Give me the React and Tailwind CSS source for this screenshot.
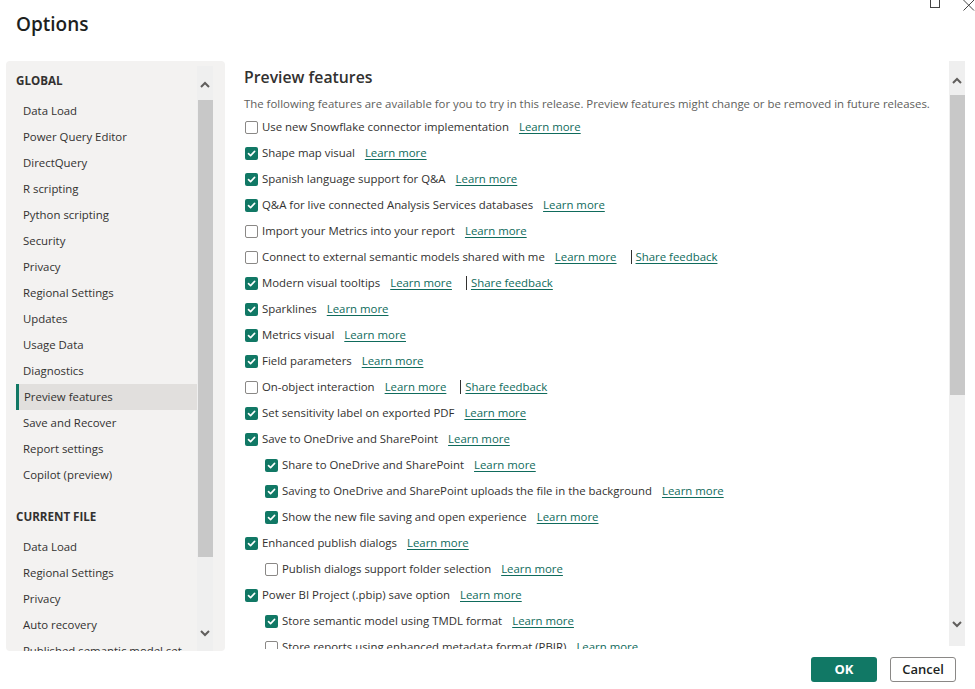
import React from "react";

const font = { fontFamily: '"Open Sans", "Noto Sans", sans-serif' };

function Check({ checked }) {
  if (checked) {
    return (
      <span className="w-[13px] h-[13px] rounded-[2px] bg-[#117865] flex items-center justify-center shrink-0">
        <svg width="9" height="9" viewBox="0 0 9 9">
          <path d="M1.5 4.6 L3.6 6.6 L7.6 2.4" fill="none" stroke="white" strokeWidth="1.6" strokeLinecap="round" strokeLinejoin="round" />
        </svg>
      </span>
    );
  }
  return <span className="w-[13px] h-[13px] rounded-[2px] border border-[#8a8886] bg-white shrink-0" />;
}

function Chevron({ up }) {
  return (
    <svg width="10" height="7" viewBox="0 0 10 7">
      <path d={up ? "M1 6 L5 2 L9 6" : "M1 1 L5 5 L9 1"} fill="none" stroke="#605e5c" strokeWidth="2" strokeLinejoin="miter" />
    </svg>
  );
}

const globalItems = [
  "Data Load",
  "Power Query Editor",
  "DirectQuery",
  "R scripting",
  "Python scripting",
  "Security",
  "Privacy",
  "Regional Settings",
  "Updates",
  "Usage Data",
  "Diagnostics",
  "Preview features",
  "Save and Recover",
  "Report settings",
  "Copilot (preview)",
];
const fileItems = ["Data Load", "Regional Settings", "Privacy", "Auto recovery", "Published semantic model set"];

const features = [
  { t: "Use new Snowflake connector implementation", c: false },
  { t: "Shape map visual", c: true },
  { t: "Spanish language support for Q&A", c: true },
  { t: "Q&A for live connected Analysis Services databases", c: true },
  { t: "Import your Metrics into your report", c: false },
  { t: "Connect to external semantic models shared with me", c: false, fb: true },
  { t: "Modern visual tooltips", c: true, fb: true },
  { t: "Sparklines", c: true },
  { t: "Metrics visual", c: true },
  { t: "Field parameters", c: true },
  { t: "On-object interaction", c: false, fb: true },
  { t: "Set sensitivity label on exported PDF", c: true },
  { t: "Save to OneDrive and SharePoint", c: true },
  { t: "Share to OneDrive and SharePoint", c: true, sub: true },
  { t: "Saving to OneDrive and SharePoint uploads the file in the background", c: true, sub: true },
  { t: "Show the new file saving and open experience", c: true, sub: true },
  { t: "Enhanced publish dialogs", c: true },
  { t: "Publish dialogs support folder selection", c: false, sub: true },
  { t: "Power BI Project (.pbip) save option", c: true },
  { t: "Store semantic model using TMDL format", c: true, sub: true },
  { t: "Store reports using enhanced metadata format (PBIR)", c: false, sub: true },
];

function Link({ children }) {
  return <span className="text-[#0f6b5c] underline underline-offset-2 decoration-[#0f6b5c]">{children}</span>;
}

export default function App() {
  return (
    <div className="relative w-[975px] h-[689px] bg-white overflow-hidden text-[#323130] flex flex-col" style={font}>
      <div className="absolute right-0 top-0 flex items-start">
        <svg width="12" height="10" viewBox="0 0 12 10" className="mr-[21px] -mt-[1px]">
          <rect x="1.5" y="-2" width="9" height="10.5" fill="none" stroke="#444" strokeWidth="1" />
        </svg>
        <svg width="13" height="11" viewBox="0 0 13 11">
          <path d="M1.5 0 L12 10.5 M12 0 L1.5 10.5" stroke="#444" strokeWidth="1" />
        </svg>
      </div>

      <div className="h-[61px] pl-[16px] pt-[10px] shrink-0">
        <h1 className="text-[19px] leading-[28px] font-semibold text-[#201f1e]">Options</h1>
      </div>

      <div className="flex h-[590px] shrink-0">
        <div className="ml-[6px] w-[219px] shrink-0 h-[590px] rounded-[4px] bg-[#f3f2f1] flex overflow-hidden">
          <div className="w-[191px] shrink-0 pl-[10px] pt-[7px] text-[11.4px] overflow-hidden">
            <div className="h-[26px] leading-[26px] font-bold text-[11.6px] mb-[4px]">GLOBAL</div>
            {globalItems.map((it) => {
              const sel = it === "Preview features";
              return (
                <div
                  key={it}
                  className={
                    sel
                      ? "h-[26px] leading-[26px] pl-[5px] border-l-[3px] border-[#117865] bg-[#e1dfdd] whitespace-nowrap"
                      : "h-[26px] leading-[26px] pl-[7px] whitespace-nowrap"
                  }
                >
                  {it}
                </div>
              );
            })}
            <div className="h-[26px] leading-[26px] font-bold text-[11.6px] mt-[16px] mb-[4px]">CURRENT FILE</div>
            {fileItems.map((it) => (
              <div key={it} className="h-[26px] leading-[26px] pl-[7px] whitespace-nowrap">
                {it}
              </div>
            ))}
          </div>
          <div className="w-[16px] shrink-0 mt-[5px] bg-[#efefef] flex flex-col items-center">
            <div className="h-[34px] flex items-center justify-center pt-[2px]">
              <Chevron up />
            </div>
            <div className="w-[15px] h-[457px] bg-[#c8c8c8]" />
            <div className="flex-1 flex items-end justify-center pb-[14px]">
              <Chevron />
            </div>
          </div>
        </div>

        <div className="ml-[10px] flex-1 flex min-w-0">
          <div className="flex-1 min-w-0 h-[588px] overflow-hidden pl-[9px] pt-[5px]">
            <h2 className="text-[15.8px] leading-[22px] font-semibold text-[#323130]">Preview features</h2>
            <p className="mt-[8px] text-[11.4px] leading-[16px] text-[#605e5c] whitespace-nowrap">
              The following features are available for you to try in this release. Preview features might change or be removed in future releases.
            </p>
            <div className="mt-[2px] text-[11.4px]">
              {features.map((f) => (
                <div
                  key={f.t}
                  className={
                    f.sub
                      ? "h-[26px] flex items-center pl-[21px] whitespace-nowrap"
                      : "h-[26px] flex items-center pl-[1px] whitespace-nowrap"
                  }
                >
                  <Check checked={f.c} />
                  <span className="ml-[4px]">{f.t}</span>
                  <span className="ml-[10px]">
                    <Link>Learn more</Link>
                  </span>
                  {f.fb && (
                    <>
                      <span className="ml-[14px] w-px h-[14px] bg-[#323130]" />
                      <span className="ml-[4px]">
                        <Link>Share feedback</Link>
                      </span>
                    </>
                  )}
                </div>
              ))}
            </div>
          </div>
          <div className="w-[16px] shrink-0 h-[585px] mr-[10px] bg-[#efefef] flex flex-col items-center">
            <div className="h-[34px] flex items-center justify-center pt-[4px]">
              <Chevron up />
            </div>
            <div className="w-[15px] h-[300px] bg-[#c8c8c8]" />
            <div className="flex-1 flex items-end justify-center pb-[18px]">
              <Chevron />
            </div>
          </div>
        </div>
      </div>

      <div className="flex justify-end gap-[13px] pr-[19px] pt-[6px]">
        <button className="w-[66px] h-[25px] rounded-[3px] bg-[#117865] text-white text-[13px] font-bold">OK</button>
        <button className="w-[66px] h-[25px] rounded-[3px] border border-[#8a8886] bg-white text-[#201f1e] text-[13px] font-semibold">Cancel</button>
      </div>
    </div>
  );
}
